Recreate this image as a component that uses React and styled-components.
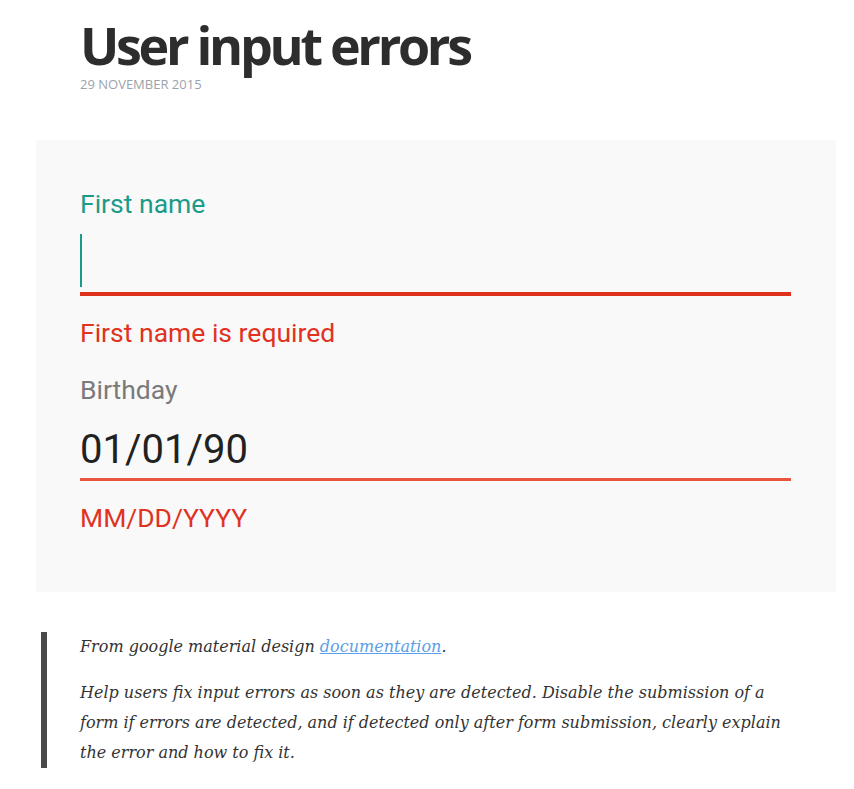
import React from 'react';
import styled, { createGlobalStyle } from 'styled-components';

const GlobalStyle = createGlobalStyle`
  html, body {
    margin: 0;
    padding: 0;
    background: #ffffff;
  }
  body {
    font-family: "Open Sans", "Noto Sans", sans-serif;
    color: #333333;
  }
`;

const Article = styled.article`
  width: 800px;
  margin-left: 36px;
  padding-top: 17px;
`;

const Header = styled.header`
  padding-left: 44px;
  margin-bottom: 48px;
`;

const Title = styled.h1`
  margin: 0;
  font-family: "Open Sans", sans-serif;
  font-weight: 700;
  font-size: 52px;
  line-height: 56px;
  letter-spacing: -3.3px;
  color: #2d2d2d;
`;

const PostDate = styled.div`
  margin-top: 3px;
  font-family: "Open Sans", sans-serif;
  font-size: 13px;
  line-height: 16px;
  text-transform: uppercase;
  color: #9aa3ab;
`;

const Demo = styled.section`
  background: #f9f9f9;
  padding: 51px 45px 61px 44px;
  font-family: Roboto, "Liberation Sans", sans-serif;
`;

const Field = styled.div`
  display: flex;
  flex-direction: column;
  & + & {
    margin-top: 31px;
  }
`;

const Label = styled.label`
  font-size: 26.5px;
  line-height: 26px;
  color: ${p => (p.focused ? '#1a9b8a' : '#7a7a7a')};
`;

const InputBox = styled.div`
  display: flex;
  align-items: flex-end;
  height: 75px;
  border-bottom: ${p => p.thick ? 4 : 3}px solid ${p => p.thick ? '#df321d' : '#e8563f'};
  font-size: 40px;
  line-height: 40px;
  color: #212121;
`;

const Caret = styled.span`
  display: block;
  width: 2px;
  height: 53px;
  margin-bottom: 5px;
  background: #1a9b8a;
`;

const Value = styled.span`
  display: block;
  margin-bottom: 8px;
`;

const ErrorText = styled.div`
  margin-top: 24px;
  font-size: 26.5px;
  line-height: 26px;
  color: #e0321f;
`;

const Quote = styled.blockquote`
  margin: 40px 0 0 5px;
  padding: 0 0 0 33px;
  border-left: 6px solid #4a4a4a;
  font-family: "DejaVu Serif", serif;
  font-style: italic;
  font-size: 16px;
  line-height: 30px;
  color: #333333;
  max-width: 715px;
`;

const QuoteP = styled.p`
  margin: 0;
  & + & {
    margin-top: 16px;
  }
`;

const Link = styled.a`
  color: #5ba0e8;
  text-decoration: underline;
`;

export default function App() {
  return (
    <>
      <GlobalStyle />
      <Article>
        <Header>
          <Title>User input errors</Title>
          <PostDate>29 November 2015</PostDate>
        </Header>
        <Demo>
          <Field>
            <Label focused>First name</Label>
            <InputBox thick>
              <Caret />
            </InputBox>
            <ErrorText>First name is required</ErrorText>
          </Field>
          <Field>
            <Label>Birthday</Label>
            <InputBox>
              <Value>01/01/90</Value>
            </InputBox>
            <ErrorText>MM/DD/YYYY</ErrorText>
          </Field>
        </Demo>
        <Quote>
          <QuoteP>
            From google material design <Link href="#">documentation</Link>.
          </QuoteP>
          <QuoteP>
            Help users fix input errors as soon as they are detected. Disable the submission of a
            form if errors are detected, and if detected only after form submission, clearly explain
            the error and how to fix it.
          </QuoteP>
        </Quote>
      </Article>
    </>
  );
}
